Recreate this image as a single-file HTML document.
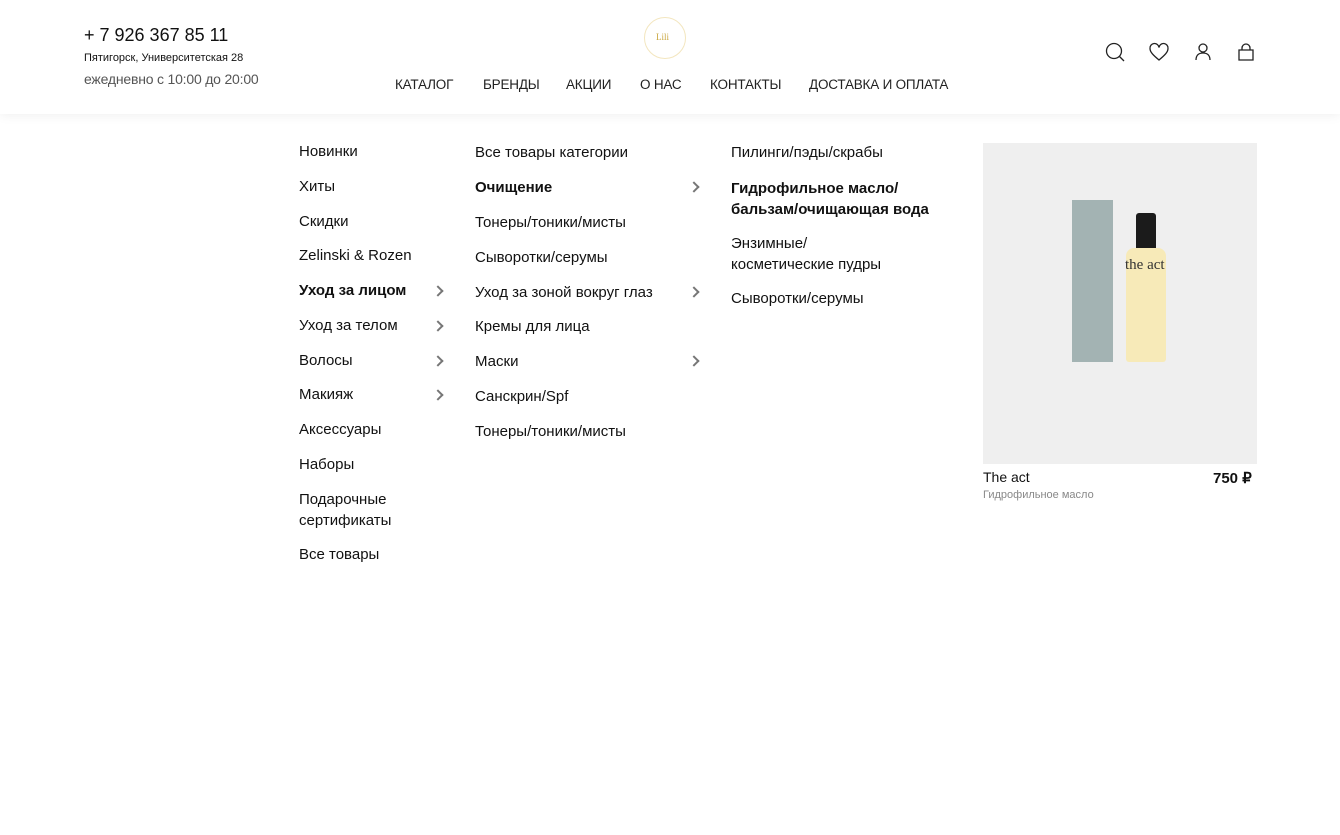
<!DOCTYPE html>
<html><head><meta charset="utf-8"><style>
*{margin:0;padding:0;box-sizing:border-box}
body{width:1340px;height:835px;background:#fff;font-family:"Liberation Sans",sans-serif;color:#111;position:relative;overflow:hidden}
.hdr{position:absolute;left:0;top:0;width:1340px;height:114px;background:#fff;box-shadow:0 2px 10px rgba(0,0,0,.06)}
.a{position:absolute;white-space:nowrap}
.nav{font-size:13.5px;color:#222;top:77px;letter-spacing:-0.2px}
.m{font-size:15px;color:#111;position:absolute;white-space:nowrap}
.b{font-weight:bold}
.chev{position:absolute;width:8px;height:8px;border-right:2px solid #777;border-top:2px solid #777;transform:rotate(45deg)}
</style></head><body>
<div class="hdr">
<div class="a" style="left:84px;top:25px;font-size:18px">+ 7 926 367 85 11</div>
<div class="a" style="left:84px;top:52px;font-size:11px">Пятигорск, Университетская 28</div>
<div class="a" style="left:84px;top:71px;font-size:14px;color:#555;letter-spacing:-0.2px">ежедневно с 10:00 до 20:00</div>
<div class="a" style="left:644px;top:17px;width:42px;height:42px;border-radius:50%;border:1px solid #f3e6bf"></div>
<div class="a" style="left:656px;top:32px;font-size:9px;color:#c9a640;font-family:'Liberation Serif',serif">Lili</div>
<div class="a nav" style="left:395px">КАТАЛОГ</div>
<div class="a nav" style="left:483px">БРЕНДЫ</div>
<div class="a nav" style="left:566px">АКЦИИ</div>
<div class="a nav" style="left:640px">О НАС</div>
<div class="a nav" style="left:710px">КОНТАКТЫ</div>
<div class="a nav" style="left:809px">ДОСТАВКА И ОПЛАТА</div>
<svg class="a" style="left:1100px;top:38px" width="160" height="28" fill="none" stroke="#222" stroke-width="1.3">
<circle cx="14" cy="13" r="7.5"/><path d="M19.5 18.5L24 23"/>
<path d="M59 22c-6-5-9-8-9-11.5a4.5 4.5 0 0 1 9-1 4.5 4.5 0 0 1 9 1C68 14 65 17 59 22z"/>
<circle cx="103" cy="10" r="4"/><path d="M96 22c0-5 3-7 7-7s7 2 7 7"/>
<path d="M139 12h14v10h-14z"/><path d="M142 12v-2a4 4 0 0 1 8 0v2"/>
</svg>
</div>
<div class="m" style="left:299px;top:143px">Новинки</div>
<div class="m" style="left:299px;top:178px">Хиты</div>
<div class="m" style="left:299px;top:213px">Скидки</div>
<div class="m" style="left:299px;top:247px">Zelinski &amp; Rozen</div>
<div class="m b" style="left:299px;top:282px">Уход за лицом</div><div class="chev" style="left:434px;top:287px"></div>
<div class="m" style="left:299px;top:317px">Уход за телом</div><div class="chev" style="left:434px;top:322px"></div>
<div class="m" style="left:299px;top:352px">Волосы</div><div class="chev" style="left:434px;top:357px"></div>
<div class="m" style="left:299px;top:386px">Макияж</div><div class="chev" style="left:434px;top:391px"></div>
<div class="m" style="left:299px;top:421px">Аксессуары</div>
<div class="m" style="left:299px;top:456px">Наборы</div>
<div class="m" style="left:299px;top:489px;line-height:21px">Подарочные<br>сертификаты</div>
<div class="m" style="left:299px;top:546px">Все товары</div>

<div class="m" style="left:475px;top:144px">Все товары категории</div>
<div class="m b" style="left:475px;top:179px">Очищение</div><div class="chev" style="left:690px;top:183px"></div>
<div class="m" style="left:475px;top:214px">Тонеры/тоники/мисты</div>
<div class="m" style="left:475px;top:249px">Сыворотки/серумы</div>
<div class="m" style="left:475px;top:284px">Уход за зоной вокруг глаз</div><div class="chev" style="left:690px;top:288px"></div>
<div class="m" style="left:475px;top:318px">Кремы для лица</div>
<div class="m" style="left:475px;top:353px">Маски</div><div class="chev" style="left:690px;top:357px"></div>
<div class="m" style="left:475px;top:388px">Санскрин/Spf</div>
<div class="m" style="left:475px;top:423px">Тонеры/тоники/мисты</div>

<div class="m" style="left:731px;top:144px">Пилинги/пэды/скрабы</div>
<div class="m b" style="left:731px;top:178px;line-height:21px">Гидрофильное масло/<br>бальзам/очищающая вода</div>
<div class="m" style="left:731px;top:233px;line-height:21px">Энзимные/<br>косметические пудры</div>
<div class="m" style="left:731px;top:290px">Сыворотки/серумы</div>

<div class="a" style="left:983px;top:143px;width:274px;height:321px;background:#efefef"></div>
<div class="a" style="left:1072px;top:200px;width:41px;height:162px;background:#a3b3b3"></div>
<div class="a" style="left:1136px;top:213px;width:20px;height:37px;background:#1b1b1b;border-radius:3px 3px 0 0"></div>
<div class="a" style="left:1126px;top:248px;width:40px;height:114px;background:#f7eab8;border-radius:8px 8px 3px 3px"></div>
<div class="a" style="left:1125px;top:257px;font-size:15px;font-family:'Liberation Serif',serif;color:#333">the act</div>
<div class="a" style="left:983px;top:469px;font-size:14px">The act</div>
<div class="a" style="left:983px;top:489px;font-size:11px;color:#888">Гидрофильное масло</div>
<div class="a b" style="left:1213px;top:469px;font-size:15px">750 ₽</div>
</body></html>
